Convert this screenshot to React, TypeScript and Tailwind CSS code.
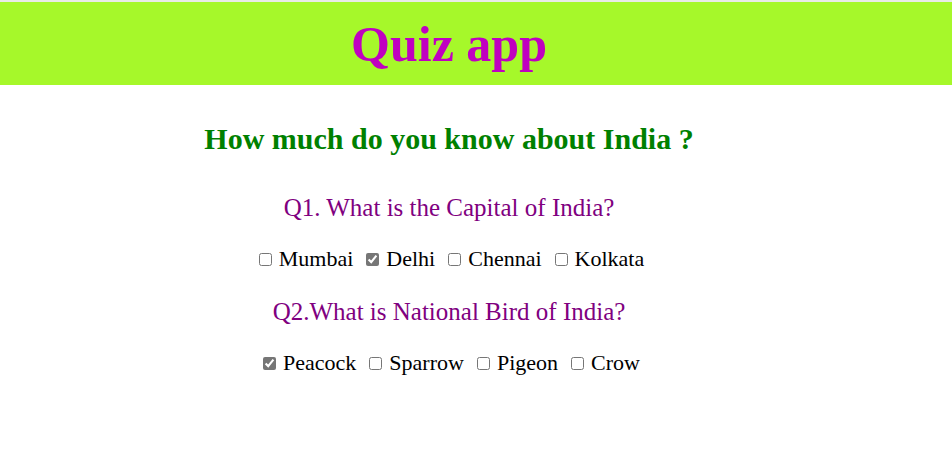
import React from "react";

const serif = { fontFamily: '"Liberation Serif", "Times New Roman", serif' };

function Option({ label, checked }: { label: string; checked?: boolean }) {
  return (
    <label className="flex items-center">
      <input
        type="checkbox"
        defaultChecked={checked}
        className="m-0 mr-[7px] h-[13px] w-[13px] accent-[#767676]"
      />
      <span>{label}</span>
    </label>
  );
}

export default function App() {
  return (
    <div className="min-h-[476px] w-[952px] bg-white text-black" style={serif}>
      <div className="h-[2px] bg-[#e9ebe6]" />
      <header className="bg-[#a6f82a] pt-[13px] pb-[12px]">
        <h1 className="w-[898px] text-center text-[50px] leading-[58px] font-bold text-[#c000c0]">
          Quiz app
        </h1>
      </header>
      <main className="w-[898px] text-center">
        <h2 className="mt-[36px] text-[30px] leading-[36px] font-bold text-[#008000]">
          How much do you know about India ?
        </h2>
        <p className="mt-[36px] text-[25px] leading-[30px] text-[#800080]">
          Q1. What is the Capital of India?
        </p>
        <div className="mt-[24px] flex justify-center gap-[13px] pl-[5px] text-[22px] leading-[24px]">
          <Option label="Mumbai" />
          <Option label="Delhi" checked />
          <Option label="Chennai" />
          <Option label="Kolkata" />
        </div>
        <p className="mt-[26px] text-[25px] leading-[30px] text-[#800080]">
          Q2.What is National Bird of India?
        </p>
        <div className="mt-[24px] flex justify-center gap-[13px] pl-[5px] text-[22px] leading-[24px]">
          <Option label="Peacock" checked />
          <Option label="Sparrow" />
          <Option label="Pigeon" />
          <Option label="Crow" />
        </div>
      </main>
    </div>
  );
}
